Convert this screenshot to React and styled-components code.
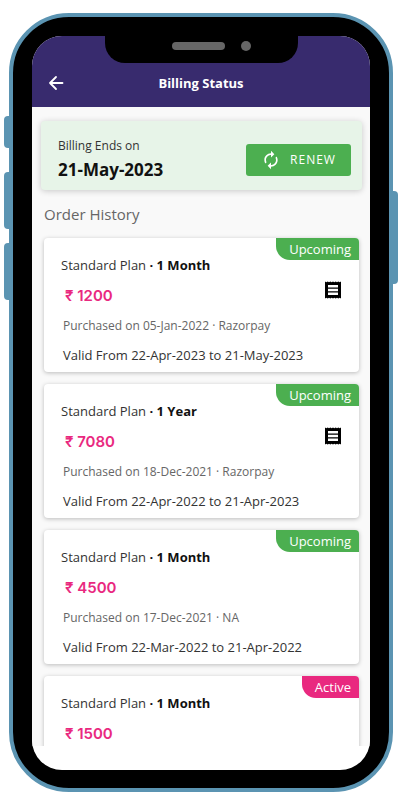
import React from 'react'
import styled, { createGlobalStyle } from 'styled-components'
import { MdAutorenew } from 'react-icons/md'

const GlobalStyle = createGlobalStyle`
    * {
        box-sizing: border-box;
    }

    body {
        margin: 0;
        background: white;
        font-family: 'Open Sans', 'Noto Sans', sans-serif;
        color: #333;
    }

    h1, h2, p {
        margin: 0;
    }
`

const Page = styled.div`
    display: flex;
    height: 100vh;
    min-height: 480px;
    padding: 13px 11px 8px 9px;
`

const Phone = styled.div`
    position: relative;
    display: flex;
    flex: 1;
    min-width: 0;
    padding: 19px 19px 18px;
    border: 4px solid #5b94b2;
    border-radius: 60px;
    background: black;
`

const SideButton = styled.span`
    position: absolute;
    top: ${props => props.$top}px;
    ${props => props.$side}: -9px;
    width: 5px;
    height: ${props => props.$length}px;
    background: #5b94b2;
    border-radius: ${props => props.$side === 'left' ? '4px 0 0 4px' : '0 4px 4px 0'};
`

const Screen = styled.div`
    display: flex;
    flex-direction: column;
    flex: 1;
    min-width: 0;
    overflow: hidden;
    border-radius: 30px;
    background: white;
`

const Notch = styled.div`
    position: absolute;
    top: 19px;
    left: 50%;
    width: 193px;
    height: 27px;
    margin-left: -96px;
    padding: 6px 47px 0 67px;
    display: flex;
    justify-content: space-between;
    background: black;
    border-radius: 0 0 20px 20px;
`

const Speaker = styled.span`
    width: 53px;
    height: 8px;
    border-radius: 4px;
    background: #666;
`

const Camera = styled.span`
    width: 10px;
    height: 10px;
    margin-top: -1px;
    border-radius: 50%;
    background: #666;
`

const Header = styled.header`
    display: grid;
    grid-template-columns: 48px 1fr 48px;
    align-items: center;
    flex: none;
    height: 71px;
    padding-top: 22px;
    background: #382b6e;
    color: white;
`

const BackButton = styled.button`
    display: flex;
    justify-content: center;
    padding: 0;
    border: 0;
    background: none;
    color: white;
`

const Title = styled.h1`
    font-size: 13px;
    line-height: 20px;
    font-weight: 700;
    text-align: center;
`

const Content = styled.main`
    flex: 1;
    min-height: 0;
    overflow: hidden;
    padding: 14px 8px 0 9px;
    background: #f9f9f9;
`

const Summary = styled.section`
    display: flex;
    align-items: center;
    justify-content: space-between;
    height: 69px;
    padding: 8px 11px 0 17px;
    border-radius: 4px;
    background: #e7f4e8;
    box-shadow: 0 1px 6px rgba(0, 0, 0, 0.2);
`

const SummaryLabel = styled.p`
    font-size: 12px;
    line-height: 20px;
`

const SummaryDate = styled.p`
    font-size: 17px;
    line-height: 28px;
    font-weight: 700;
    color: #111;
`

const RenewButton = styled.button`
    display: flex;
    align-items: center;
    justify-content: center;
    gap: 9px;
    width: 105px;
    height: 32px;
    padding: 0;
    border: 0;
    border-radius: 3px;
    background: #4caf50;
    color: white;
    font-family: inherit;
    font-size: 12px;
    letter-spacing: 1px;
`

const SectionTitle = styled.h2`
    padding: 12px 3px;
    font-size: 15px;
    line-height: 24px;
    font-weight: 400;
    color: #666;
`

const Orders = styled.div`
    display: grid;
    gap: 12px;
    padding: 0 3px;
`

const OrderCard = styled.article`
    position: relative;
    height: 134px;
    padding: 17px 18px 0 17px;
    border-radius: 4px;
    background: white;
    box-shadow: 0 1px 4px rgba(0, 0, 0, 0.25);
`

const Badge = styled.span`
    position: absolute;
    top: 0;
    right: 0;
    height: 22px;
    padding: 0 8px 0 13px;
    border-radius: 0 4px 0 14px;
    background: ${props => props.$active ? '#e9297f' : '#4caf50'};
    color: white;
    font-size: 13px;
    line-height: 22px;
`

const Plan = styled.p`
    font-size: 13px;
    line-height: 20px;

    b {
        color: #111;
    }
`

const PriceRow = styled.div`
    display: flex;
    align-items: center;
    justify-content: space-between;
    height: 30px;
    margin-top: 6px;
    padding-left: 4px;
`

const Price = styled.p`
    font-family: Inter, sans-serif;
    font-size: 15px;
    line-height: 20px;
    font-weight: 600;
    color: #e9297f;
`

const ReceiptButton = styled.button`
    display: flex;
    margin-top: -12px;
    padding: 0;
    border: 0;
    background: none;
    color: black;
`

const Purchased = styled.p`
    margin-top: 5px;
    padding-left: 2px;
    font-size: 12px;
    line-height: 20px;
    color: #666;
`

const Validity = styled.p`
    margin-top: 9px;
    padding-left: 2px;
    font-size: 13px;
    line-height: 20px;
`

const SafeArea = styled.div`
    flex: none;
    height: 24px;
`

const orders = [
    { term: '1 Month', price: '1200', status: 'Upcoming', bought: '05-Jan-2022', via: 'Razorpay', from: '22-Apr-2023', to: '21-May-2023', receipt: true },
    { term: '1 Year', price: '7080', status: 'Upcoming', bought: '18-Dec-2021', via: 'Razorpay', from: '22-Apr-2022', to: '21-Apr-2023', receipt: true },
    { term: '1 Month', price: '4500', status: 'Upcoming', bought: '17-Dec-2021', via: 'NA', from: '22-Mar-2022', to: '21-Apr-2022' },
    { term: '1 Month', price: '1500', status: 'Active' }
]

const BackArrow = () => (
    <svg width="16" height="16" viewBox="0 0 16 16" fill="none" stroke="currentColor" strokeWidth="1.8" strokeLinecap="round" strokeLinejoin="round">
        <path d="M14.5 8H2M8 2L2 8l6 6" />
    </svg>
)

const ReceiptIcon = () => (
    <svg width="16" height="18" viewBox="0 0 16 18">
        <path
            fill="currentColor"
            fillRule="evenodd"
            d="M0 .5l1.3 .8L2.7.5 4 1.3 5.3.5l1.4.8L8 .5l1.3.8 1.4-.8 1.3.8 1.3-.8 1.4.8L16 .5v17l-1.3-.8-1.4.8-1.3-.8-1.3.8-1.4-.8-1.3.8-1.3-.8-1.4.8-1.3-.8-1.3.8-1.4-.8L0 17.5zM3 4v2.5h10V4zM3 7.8v2.4h10V7.8zM3 11.5V14h10v-2.5z"
        />
    </svg>
)

const Order = ({ order }) => (
    <OrderCard>
        <Badge $active={order.status === 'Active'}>{order.status}</Badge>
        <Plan>Standard Plan <b>· {order.term}</b></Plan>
        <PriceRow>
            <Price>₹ {order.price}</Price>
            {order.receipt && <ReceiptButton aria-label="Receipt"><ReceiptIcon /></ReceiptButton>}
        </PriceRow>
        {order.bought && <Purchased>Purchased on {order.bought} · {order.via}</Purchased>}
        {order.from && <Validity>Valid From {order.from} to {order.to}</Validity>}
    </OrderCard>
)

export default function App() {
    return (
        <Page>
            <GlobalStyle />
            <Phone>
                <SideButton $side="left" $top={99} $length={32} />
                <SideButton $side="left" $top={155} $length={57} />
                <SideButton $side="left" $top={226} $length={57} />
                <SideButton $side="right" $top={174} $length={93} />
                <Screen>
                    <Header>
                        <BackButton aria-label="Back"><BackArrow /></BackButton>
                        <Title>Billing Status</Title>
                    </Header>
                    <Content>
                        <Summary>
                            <div>
                                <SummaryLabel>Billing Ends on</SummaryLabel>
                                <SummaryDate>21-May-2023</SummaryDate>
                            </div>
                            <RenewButton><MdAutorenew size={20} />RENEW</RenewButton>
                        </Summary>
                        <SectionTitle>Order History</SectionTitle>
                        <Orders>
                            {orders.map((order, i) => <Order key={i} order={order} />)}
                        </Orders>
                    </Content>
                    <SafeArea />
                </Screen>
                <Notch>
                    <Speaker />
                    <Camera />
                </Notch>
            </Phone>
        </Page>
    )
}
